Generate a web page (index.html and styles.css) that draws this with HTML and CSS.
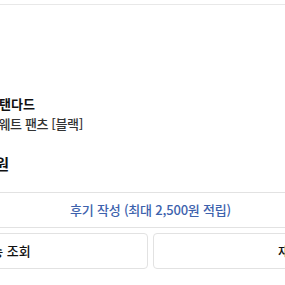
FILE: index.html
```html
<!DOCTYPE html>
<html lang="ko">

<head>
  <meta charset="UTF-8">
  <title>주문 상세</title>
  <link rel="stylesheet" href="styles.css">
</head>

<body>
  <div class="order">
    <div class="order-top"></div>
    <div class="goods">
      <p class="goods-brand">스탠다드</p>
      <p class="goods-name">스웨트 팬츠 [블랙]</p>
      <p class="goods-price">39,900원</p>
    </div>
    <a class="btn btn-review" href="javascript:void(0)">후기 작성 (최대 2,500원 적립)</a>
    <div class="btn-row">
      <a class="btn" href="javascript:void(0)">배송 조회</a>
      <a class="btn" href="javascript:void(0)">재구매</a>
    </div>
  </div>
</body>

</html>
```

FILE: styles.css
```css
body,
div,
p {
  margin: 0;
  padding: 0;
}

body {
  background: #fff;
  overflow: hidden;
  font: 500 13px/1.5 "Noto Sans CJK KR", "Liberation Sans", sans-serif;
  color: #111;
}

a {
  text-decoration: none;
  color: #111;
}

.order {
  width: 577px;
  margin-left: -138px;
}

.order-top {
  height: 4px;
  border-bottom: 1px solid #e8e8e8;
}

.goods {
  padding: 89px 0 0 125px;
}

.goods-brand {
  font-weight: 700;
  line-height: 20px;
}

.goods-name {
  line-height: 20px;
  letter-spacing: -0.4px;
  color: #333;
}

.goods-price {
  margin: 20px 0 0 -41px;
  font-size: 15px;
  font-weight: 700;
  line-height: 20px;
}

.btn {
  display: flex;
  align-items: center;
  justify-content: center;
  height: 34px;
  border: 1px solid #e2e2e2;
  border-radius: 4px;
}

.btn-review {
  margin-top: 18px;
  letter-spacing: -0.2px;
  color: #3d62ad;
}

.btn-row {
  display: flex;
  gap: 5px;
  margin-top: 5px;
}

.btn-row .btn {
  flex: 1;
}
```
